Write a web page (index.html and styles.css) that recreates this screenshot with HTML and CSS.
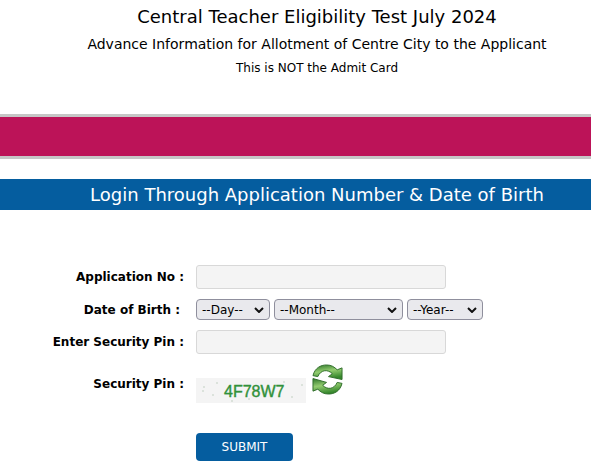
FILE: index.html
```html
<!DOCTYPE html>
<html lang="en">
<head>
<meta charset="utf-8">
<meta name="viewport" content="width=device-width, initial-scale=1">
<title>Central Teacher Eligibility Test July 2024</title>
<link rel="stylesheet" href="styles.css">
</head>
<body>
<header class="masthead">
  <h1 class="title">Central Teacher Eligibility Test July 2024</h1>
  <p class="subtitle">Advance Information for Allotment of Centre City to the Applicant</p>
  <p class="note">This is NOT the Admit Card</p>
</header>
<div class="band"></div>
<main>
  <h2 class="login-heading">Login Through Application Number &amp; Date of Birth</h2>
  <form class="login-form">
    <label class="label" for="appno">Application No :</label>
    <input class="text-input" id="appno" type="text">

    <label class="label label-dob" for="day">Date of Birth :</label>
    <div class="date-fields">
      <span class="picker picker-day"><select id="day"><option>--Day--</option></select><svg class="chevron" viewBox="0 0 10 6"><path d="M1 1l4 4 4-4"/></svg></span>
      <span class="picker picker-month"><select aria-label="Month"><option>--Month--</option></select><svg class="chevron" viewBox="0 0 10 6"><path d="M1 1l4 4 4-4"/></svg></span>
      <span class="picker picker-year"><select aria-label="Year"><option>--Year--</option></select><svg class="chevron" viewBox="0 0 10 6"><path d="M1 1l4 4 4-4"/></svg></span>
    </div>

    <label class="label" for="pin">Enter Security Pin :</label>
    <input class="text-input" id="pin" type="text">

    <span class="label">Security Pin :</span>
    <div class="captcha-row">
      <svg class="captcha" viewBox="0 0 110 25">
        <rect width="110" height="25" fill="#f4f4f4"/>
        <g fill="#d3dcd3">
          <circle cx="8" cy="9" r="1"/><circle cx="7" cy="13" r="1"/><circle cx="21" cy="5" r="1"/>
          <circle cx="17" cy="17" r="1"/><circle cx="36" cy="23" r="1"/><circle cx="53" cy="21" r="1"/>
          <circle cx="96" cy="19" r="1"/><circle cx="106" cy="7" r="1"/><circle cx="88" cy="4" r="1"/>
        </g>
        <text class="captcha-text" x="28" y="19">4F78W7</text>
      </svg>
      <button class="refresh" type="button" aria-label="Refresh security pin">
        <svg viewBox="0 0 32 32">
          <defs>
            <linearGradient id="leaf" x1="0" y1="0" x2="0.3" y2="1">
              <stop offset="0" stop-color="#2c7527"/>
              <stop offset="0.5" stop-color="#93cc70"/>
              <stop offset="1" stop-color="#36872c"/>
            </linearGradient>
          </defs>
          <g fill="url(#leaf)" stroke="#2f6d2b" stroke-linejoin="round">
            <path d="M1 12C3 4 9 1 15 1c5 0 8 2 11 5l5-2v12l-14-3 4-3C16 5 9 6 6 13z"/>
            <path d="M31 20c-2 8-8 11-14 11-5 0-8-2-11-5l-5 2V15l14 4-4 3c5 5 12 4 15-3z"/>
          </g>
        </svg>
      </button>
    </div>

    <button class="submit" type="submit">SUBMIT</button>
  </form>
</main>
</body>
</html>
```
FILE: styles.css
```css
* {
  box-sizing: border-box;
}

body {
  margin: 0;
  background: #fff;
  color: #000;
  font: 12px "DejaVu Sans", sans-serif;
}

h1, h2, p {
  margin: 0;
  font-weight: normal;
}

.masthead {
  padding: 4px 0 36px 43px;
  text-align: center;
}

.title {
  font-size: 18px;
  line-height: 26px;
}

.subtitle {
  font-size: 14px;
  line-height: 28px;
}

.note {
  line-height: 20px;
}

.band {
  height: 45px;
  background: #bc1358;
  border: solid #c6c6c6;
  border-width: 3px 0;
}

.login-heading {
  margin-top: 20px;
  padding: 1px 0 0 43px;
  background: #055d9f;
  color: #fff;
  font-size: 18px;
  line-height: 30px;
  text-align: center;
}

.login-form {
  display: grid;
  grid-template-columns: 184px 1fr;
  column-gap: 12px;
  row-gap: 10px;
  align-items: center;
  padding: 55px 12px 11px 0;
}

.label {
  font-weight: bold;
  text-align: right;
}

.label-dob {
  padding-right: 4px;
}

.text-input {
  width: 250px;
  height: 24px;
  padding: 0 6px;
  background: #f4f4f4;
  border: 1px solid #d8d8d8;
  border-radius: 3px;
  font: inherit;
}

.date-fields {
  display: flex;
  gap: 4px;
}

.picker {
  position: relative;
}

.picker-day {
  width: 74px;
}

.picker-month {
  width: 129px;
}

.picker-year {
  width: 76px;
}

select {
  display: block;
  width: 100%;
  height: 21px;
  padding: 0 5px;
  appearance: none;
  background: #e9e9ed;
  border: 1px solid #8f8f9d;
  border-radius: 4px;
  color: #000;
  font: inherit;
}

.chevron {
  position: absolute;
  top: 8px;
  right: 6px;
  width: 10px;
  height: 6px;
  fill: none;
  stroke: #111;
  stroke-width: 2;
  pointer-events: none;
}

.captcha-row {
  display: flex;
  align-items: flex-end;
  gap: 6px;
  height: 39px;
}

.captcha {
  width: 110px;
  height: 25px;
}

.captcha-text {
  fill: #31913a;
  stroke: #31913a;
  stroke-width: 0.4;
  font: 16px "Liberation Sans", sans-serif;
}

.refresh {
  align-self: flex-start;
  width: 31px;
  height: 31px;
  padding: 0;
  background: none;
  border: 0;
}

.refresh svg {
  display: block;
}

.submit {
  grid-column: 2;
  width: 97px;
  height: 28px;
  margin-top: 20px;
  padding: 0;
  background: #055d9f;
  border: 0;
  border-radius: 4px;
  color: #fff;
  font: inherit;
}
```
